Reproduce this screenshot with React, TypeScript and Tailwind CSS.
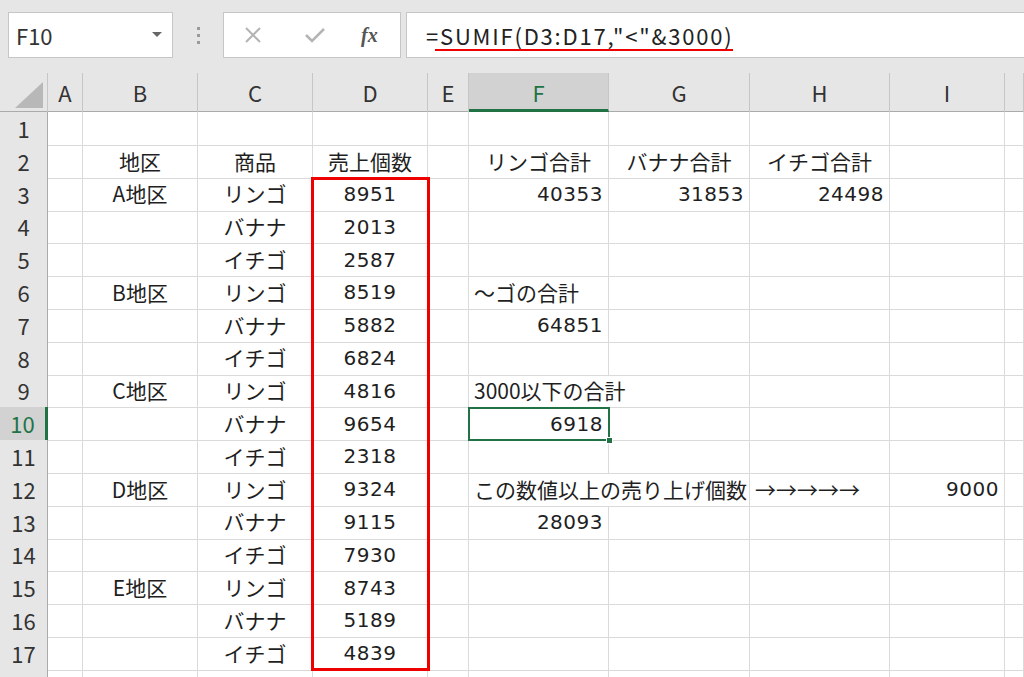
import React from "react";

type Align = "l" | "c" | "r";

interface Cell {
  text: string;
  align: Align;
  num?: boolean;
  span?: number;
}

const COLS = ["A", "B", "C", "D", "E", "F", "G", "H", "I", "J"];
const GRID = "grid grid-cols-[48px_35px_115px_115px_115px_41px_140px_141px_140px_115px_1fr]";

const jp = { fontFamily: '"Noto Sans CJK JP", "Noto Sans", sans-serif' };
const num = { fontFamily: '"DejaVu Sans", "Noto Sans CJK JP", sans-serif' };

const c = (text: string): Cell => ({ text, align: "c" });
const cn = (text: string): Cell => ({ text, align: "c", num: true });
const rn = (text: string): Cell => ({ text, align: "r", num: true });
const l = (text: string, span?: number): Cell => ({ text, align: "l", span });

// row number -> column letter -> cell
const data: Record<number, Record<string, Cell>> = {
  2: { B: c("地区"), C: c("商品"), D: c("売上個数"), F: c("リンゴ合計"), G: c("バナナ合計"), H: c("イチゴ合計") },
  3: { B: c("A地区"), C: c("リンゴ"), D: cn("8951"), F: rn("40353"), G: rn("31853"), H: rn("24498") },
  4: { C: c("バナナ"), D: cn("2013") },
  5: { C: c("イチゴ"), D: cn("2587") },
  6: { B: c("B地区"), C: c("リンゴ"), D: cn("8519"), F: l("～ゴの合計") },
  7: { C: c("バナナ"), D: cn("5882"), F: rn("64851") },
  8: { C: c("イチゴ"), D: cn("6824") },
  9: { B: c("C地区"), C: c("リンゴ"), D: cn("4816"), F: l("3000以下の合計", 2) },
  10: { C: c("バナナ"), D: cn("9654"), F: rn("6918") },
  11: { C: c("イチゴ"), D: cn("2318") },
  12: { B: c("D地区"), C: c("リンゴ"), D: cn("9324"), F: l("この数値以上の売り上げ個数", 2), H: l("→→→→→"), I: rn("9000") },
  13: { C: c("バナナ"), D: cn("9115"), F: rn("28093") },
  14: { C: c("イチゴ"), D: cn("7930") },
  15: { B: c("E地区"), C: c("リンゴ"), D: cn("8743") },
  16: { C: c("バナナ"), D: cn("5189") },
  17: { C: c("イチゴ"), D: cn("4839") },
};

function GridRow({ n }: { n: number }) {
  const row = data[n] || {};
  const selected = n === 10;
  const cells: React.ReactNode[] = [];
  let skip = 0;
  COLS.forEach((col) => {
    if (skip > 0) {
      skip--;
      return;
    }
    const cell = row[col];
    if (cell?.span) skip = cell.span - 1;
    const justify =
      cell?.align === "r" ? "justify-end" : cell?.align === "l" ? "justify-start" : "justify-center";
    cells.push(
      <div
        key={col}
        className={`${cell?.span === 2 ? "col-span-2" : ""} flex items-center ${justify} border-r border-b border-[#dadada] px-[5px] whitespace-nowrap text-[#1f1f1f]`}
      >
        {cell && (
          <span
            className={cell.num ? "text-[20px] tracking-[0.5px]" : "text-[21px]"}
            style={cell.num ? num : jp}
          >
            {cell.text}
          </span>
        )}
      </div>
    );
  });
  return (
    <div className={`${GRID} h-[32.8px] shrink-0`}>
      <div
        className={`flex items-center justify-center border-b text-[22px] ${
          selected
            ? "bg-[#d2d2d2] text-[#217346] border-r-[3px] border-r-[#217346] border-b-[#c6c6c6]"
            : "bg-[#e6e6e6] text-[#333] border-r border-r-[#ababab] border-b-[#c6c6c6]"
        }`}
        style={jp}
      >
        {n}
      </div>
      {cells}
    </div>
  );
}

export default function App() {
  const rows = Array.from({ length: 18 }, (_, i) => i + 1);

  return (
    <div className="relative w-[1024px] h-[677px] overflow-hidden bg-white flex flex-col" style={jp}>
      {/* formula bar */}
      <div className="h-[73px] shrink-0 bg-[#e6e6e6] flex items-start pt-[12px] pl-[8px]">
        <div className="w-[165px] h-[46px] bg-white border border-[#c6c6c6] flex items-center justify-between pl-[7px] pr-[10px]">
          <span className="text-[22px] text-[#333]">F10</span>
          <span className="w-0 h-0 border-l-[5px] border-r-[5px] border-t-[5px] border-l-transparent border-r-transparent border-t-[#666] mb-[2px]" />
        </div>
        <div className="w-[50px] h-[46px] flex flex-col items-center justify-center gap-[4px]">
          <span className="w-[3px] h-[3px] bg-[#9a9a9a]" />
          <span className="w-[3px] h-[3px] bg-[#9a9a9a]" />
          <span className="w-[3px] h-[3px] bg-[#9a9a9a]" />
        </div>
        <div className="w-[178px] h-[46px] bg-white border border-[#c6c6c6] flex items-center">
          <svg className="ml-[18px]" width="22" height="22" viewBox="0 0 22 22">
            <path d="M4 4 L18 18 M18 4 L4 18" stroke="#b4b4b4" strokeWidth="2" fill="none" />
          </svg>
          <svg className="ml-[39px]" width="24" height="22" viewBox="0 0 24 22">
            <path d="M3 11 L9 17 L21 5" stroke="#b4b4b4" strokeWidth="2.5" fill="none" />
          </svg>
          <span
            className="ml-[34px] text-[20px] italic font-bold text-[#555]"
            style={{ fontFamily: '"Liberation Serif", serif' }}
          >
            fx
          </span>
        </div>
        <div className="ml-[5px] flex-1 h-[46px] bg-white border border-[#c6c6c6] border-r-0 flex items-center pl-[19px]">
          <span className="text-[22px] text-[#222] tracking-[1.8px]">=SUMIF(D3:D17,"&lt;"&amp;3000)</span>
        </div>
      </div>

      {/* column headers */}
      <div className={`${GRID} h-[39px] shrink-0 bg-[#e6e6e6] border-b border-[#ababab]`}>
        <div className="relative border-r border-[#c6c6c6]">
          <div className="absolute left-[15px] top-[9px] w-0 h-0 border-l-[28px] border-b-[26px] border-l-transparent border-b-[#b8b8b8]" />
        </div>
        {COLS.map((col) => (
          <div
            key={col}
            className={`flex items-center justify-center text-[22px] border-r border-[#c6c6c6] ${
              col === "F" ? "bg-[#d2d2d2] text-[#217346] border-b-[3px] border-b-[#217346] pt-[3px]" : "text-[#333]"
            }`}
          >
            {col === "J" ? "" : col}
          </div>
        ))}
      </div>

      {/* rows */}
      {rows.map((n) => (
        <GridRow key={n} n={n} />
      ))}

      {/* selected cell F10 */}
      <div className="absolute left-[468px] top-[407px] w-[142px] h-[34px] border-2 border-[#217346]">
        <div className="absolute -right-[5px] -bottom-[5px] w-[7px] h-[7px] bg-[#217346] border border-white" />
      </div>

      {/* red annotations */}
      <div className="absolute left-[435px] top-[49px] w-[298px] h-[2px] bg-[#ee0000]" />
      <div className="absolute left-[311px] top-[177px] w-[119px] h-[494px] border-[3px] border-[#ee0000]" />
    </div>
  );
}
